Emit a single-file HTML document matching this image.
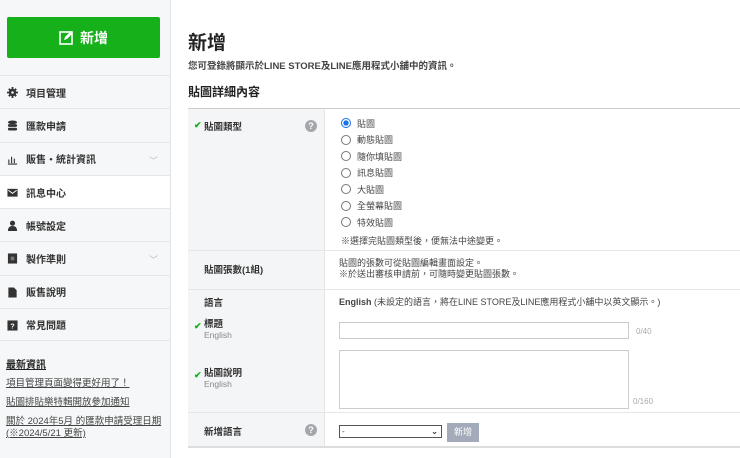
<!DOCTYPE html>
<html><head><meta charset="utf-8"><style>
*{margin:0;padding:0;box-sizing:border-box}
body{width:740px;height:458px;overflow:hidden;background:#fff;font-family:"Liberation Sans","Noto Sans CJK TC",sans-serif;color:#222;position:relative}
#side{position:absolute;left:0;top:0;width:171px;height:458px;background:#f6f7f8;border-right:1px solid #e0e2e5}
.btn{position:absolute;left:7px;top:17px;width:153px;height:41px;background:#16b11a;border-radius:2px;color:#fff;font-weight:bold;font-size:14px;display:flex;align-items:center;justify-content:center;gap:6px}
.menu{position:absolute;left:0;top:75px;width:170px}
.mi{height:33.3px;border-top:1px solid #e4e6e8;display:flex;align-items:center;padding-left:26px;font-size:10px;font-weight:bold;color:#333;position:relative}
.mi.act{background:#fff}
.mi .ic{position:absolute;left:7px;top:11px;width:11px;height:11px}
.mi .ch{position:absolute;right:12px;top:11px;color:#bbb;font-size:9px;font-weight:normal}
.news{position:absolute;left:6px;top:360px;font-size:9.5px;color:#444}
.news div{text-decoration:underline;margin-bottom:7px;line-height:12px}
#main{position:absolute;left:188px;top:0;width:552px}
h1{position:absolute;top:28px;font-size:19px;font-weight:bold}
.sub{position:absolute;top:58px;font-size:9.5px;font-weight:bold;color:#444}
h2{position:absolute;top:83px;font-size:12px;font-weight:bold}
.tbl{position:absolute;top:108px;left:0;width:552px;border-top:1px solid #ccc;border-bottom:2px solid #ddd}
.row{display:flex;border-bottom:1px solid #e6e6e6}
.lab{width:137px;background:#f4f5f6;border-right:1px solid #e6e6e6;font-size:9.5px;font-weight:bold;color:#333;position:relative}
.val{flex:1;font-size:9px;color:#444;position:relative}
.q{position:absolute;right:7px;width:12px;height:12px;border-radius:50%;background:#a3a6ab;color:#fff;font-size:9px;text-align:center;line-height:12px;font-weight:bold}
.ck{color:#16b11a;font-size:9px;position:absolute;left:6px}
.r{display:flex;align-items:center;height:16.5px}
.r i{width:10px;height:10px;border:1px solid #777;border-radius:50%;margin-right:6px;display:inline-block}
.r i.on{border-color:#1a73e8;background:radial-gradient(#1a73e8 45%,#fff 50%)}
.eng{font-size:8.5px;color:#888;font-weight:normal}
</style></head><body>
<div id="side">
<div class="btn"><svg width="15" height="15" viewBox="0 0 15 15"><rect x="1" y="2" width="12" height="12" fill="none" stroke="#fff" stroke-width="1.6"/><path d="M5 10 L6 7 L12 1 L14 3 L8 9 Z" fill="#fff"/></svg>新增</div>
<div class="menu">
<div class="mi"><svg class="ic" viewBox="0 0 12 12"><circle cx="6" cy="6" r="4" fill="#333"/><path d="M6 0v12M0 6h12M2 2l8 8M10 2l-8 8" stroke="#333" stroke-width="2"/><circle cx="6" cy="6" r="1.4" fill="#f6f7f8"/></svg>項目管理</div>
<div class="mi"><svg class="ic" viewBox="0 0 12 12"><ellipse cx="6" cy="2.5" rx="5" ry="2" fill="#333"/><rect x="1" y="4.5" width="10" height="3" rx="1.5" fill="#333"/><rect x="1" y="8.5" width="10" height="3" rx="1.5" fill="#333"/></svg>匯款申請</div>
<div class="mi"><svg class="ic" viewBox="0 0 12 12"><path d="M1 11h10M2 10V6M5 10V3M8 10V5" stroke="#333" stroke-width="1.2" fill="none"/></svg>販售‧統計資訊<span class="ch">﹀</span></div>
<div class="mi act"><svg class="ic" viewBox="0 0 12 12"><rect x="0.5" y="2" width="11" height="8.5" fill="#333"/><path d="M1.5 3.5l4.5 3.5 4.5-3.5" stroke="#fff" fill="none"/></svg>訊息中心</div>
<div class="mi"><svg class="ic" viewBox="0 0 12 12"><circle cx="6" cy="3.5" r="2.8" fill="#333"/><path d="M1 12c0-4 2-5.5 5-5.5s5 1.5 5 5.5z" fill="#333"/></svg>帳號設定</div>
<div class="mi"><svg class="ic" viewBox="0 0 12 12"><rect x="1" y="0.5" width="10" height="11" fill="#333"/><rect x="4" y="4" width="4" height="4" fill="#777"/></svg>製作準則<span class="ch">﹀</span></div>
<div class="mi"><svg class="ic" viewBox="0 0 12 12"><path d="M1.5 0.5h6l3 3v8h-9z" fill="#333"/></svg>販售說明</div>
<div class="mi" style="border-bottom:1px solid #e4e6e8"><svg class="ic" viewBox="0 0 12 12"><rect x="0.5" y="0.5" width="11" height="11" fill="#333"/><text x="6" y="9.5" font-size="8" fill="#fff" text-anchor="middle" font-family="Liberation Sans">?</text></svg>常見問題</div>
</div>
<div class="news"><div style="font-weight:bold;color:#222;font-size:10px;margin-bottom:6px">最新資訊</div><div>項目管理頁面變得更好用了！</div><div>貼圖排貼樂特輯開放參加通知</div><div style="margin-bottom:0">關於 2024年5月 的匯款申請受理日期<br>(※2024/5/21 更新)</div></div>
</div>
<div id="main">
<h1>新增</h1>
<div class="sub">您可登錄將顯示於LINE STORE及LINE應用程式小舖中的資訊。</div>
<h2>貼圖詳細內容</h2>
<div class="tbl">
<div class="row" style="height:142px"><div class="lab"><span class="ck" style="top:11px">✔</span><span style="position:absolute;left:16px;top:10px">貼圖類型</span><span class="q" style="top:11px">?</span></div>
<div class="val" style="padding:6px 0 0 16px">
<div class="r"><i class="on"></i>貼圖</div><div class="r"><i></i>動態貼圖</div><div class="r"><i></i>隨你填貼圖</div><div class="r"><i></i>訊息貼圖</div><div class="r"><i></i>大貼圖</div><div class="r"><i></i>全螢幕貼圖</div><div class="r"><i></i>特效貼圖</div>
<div style="margin-top:3px">※選擇完貼圖類型後，便無法中途變更。</div></div></div>
<div class="row" style="height:39px"><div class="lab"><span style="position:absolute;left:16px;top:11px">貼圖張數(1組)</span></div>
<div class="val" style="padding:7px 0 0 14px;line-height:11px">貼圖的張數可從貼圖編輯畫面設定。<br>※於送出審核申請前，可隨時變更貼圖張數。</div></div>
<div class="row" style="height:123px"><div class="lab">
<span style="position:absolute;left:16px;top:5px">語言</span>
<span class="ck" style="top:31px">✔</span><span style="position:absolute;left:16px;top:29px;line-height:11px">標題<br><span class="eng">English</span></span>
<span class="ck" style="top:80px">✔</span><span style="position:absolute;left:16px;top:78px;line-height:11px">貼圖說明<br><span class="eng">English</span></span></div>
<div class="val"><div style="position:absolute;left:14px;top:5px"><b>English</b> (未設定的語言，將在LINE STORE及LINE應用程式小舖中以英文顯示。)</div>
<div style="position:absolute;left:14px;top:32px;width:290px;height:17px;border:1px solid #ccc"></div><span style="position:absolute;left:311px;top:37px;color:#aaa;font-size:8px">0/40</span>
<div style="position:absolute;left:14px;top:60px;width:290px;height:59px;border:1px solid #ccc"></div><span style="position:absolute;left:308px;top:107px;color:#aaa;font-size:8px">0/160</span></div></div>
<div class="row" style="height:33px;border-bottom:none"><div class="lab"><span style="position:absolute;left:16px;top:11px">新增語言</span><span class="q" style="top:11px">?</span></div>
<div class="val"><div style="position:absolute;left:14px;top:12px;width:103px;height:13px;border:1px solid #555;font-size:8px;padding-left:2px;line-height:11px">-<span style="position:absolute;right:3px;font-size:8px;font-weight:bold">⌄</span></div>
<div style="position:absolute;left:122px;top:10px;width:32px;height:19px;background:#a3abba;color:#fff;font-size:9px;text-align:center;line-height:19px">新增</div></div></div>
</div>
</div>
</body></html>
